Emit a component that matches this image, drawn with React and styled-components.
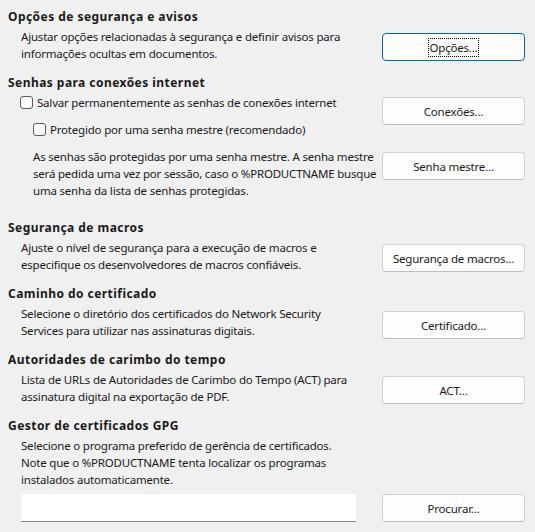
import React from "react";
import styled, { createGlobalStyle } from "styled-components";

const GlobalStyle = createGlobalStyle`
	html, body {
		margin: 0;
		padding: 0;
		background: #f0f0f0;
	}
	body {
		font-family: "Noto Sans", "Open Sans", sans-serif;
		font-size: 11.5px;
		letter-spacing: -0.2px;
		color: #1a1a1a;
	}
`;

const Page = styled.div`
	width: 535px;
	height: 532px;
	box-sizing: border-box;
	padding: 8px 10px 0 8px;
	display: flex;
	flex-direction: column;
	gap: 12px;
`;

const Section = styled.section`
	display: flex;
	flex-direction: column;
	gap: 3px;
	padding-bottom: ${(p) => p.$extra || 0}px;
`;

const Heading = styled.h2`
	margin: 0;
	font-size: 12px;
	font-weight: bold;
	letter-spacing: 0.45px;
	line-height: 17px;
	white-space: nowrap;
`;

const Row = styled.div`
	display: flex;
	align-items: ${(p) => p.$align || "flex-end"};
	justify-content: space-between;
	padding-left: ${(p) => p.$inset ?? 13}px;
`;

const Stack = styled.div`
	display: flex;
	flex-direction: column;
	gap: ${(p) => p.$gap || 0}px;
	padding-left: 13px;
`;

const Text = styled.p`
	margin: 0;
	line-height: 17px;
	white-space: nowrap;
	padding-left: ${(p) => p.$indent || 0}px;
`;

const Column = styled.div`
	display: flex;
	flex-direction: column;
	gap: ${(p) => p.$gap || 0}px;
	padding-top: ${(p) => p.$top || 0}px;
`;

const Button = styled.button`
	width: 143px;
	height: 28px;
	margin-bottom: ${(p) => (p.$flush ? 0 : 1)}px;
	box-sizing: border-box;
	background: #fdfdfd;
	border: 1px solid ${(p) => (p.$focused ? "#0067c0" : "#d0d0d0")};
	border-bottom-color: ${(p) => (p.$focused ? "#0067c0" : "#bdbdbd")};
	border-radius: 4px;
	font-family: inherit;
	font-size: 11.5px;
	letter-spacing: -0.2px;
	color: #1a1a1a;
	padding: 0;
	display: flex;
	align-items: center;
	justify-content: center;
	flex-shrink: 0;
`;

const FocusLabel = styled.span`
	outline: 1px dotted #000;
	padding: 0 1px;
	line-height: 17px;
`;

const CheckRow = styled.label`
	display: flex;
	align-items: center;
	gap: 4px;
	line-height: 17px;
	height: 17px;
	padding-left: ${(p) => p.$indent || 0}px;
	white-space: nowrap;
`;

const Box = styled.span`
	width: 13px;
	height: 13px;
	box-sizing: border-box;
	border: 1px solid #5a5a5a;
	border-radius: 3px;
	background: #fbfbfb;
	flex-shrink: 0;
`;

const FieldRow = styled.div`
	display: flex;
	align-items: flex-end;
	justify-content: space-between;
`;

const PathInput = styled.input`
	width: 335px;
	height: 28px;
	box-sizing: border-box;
	border: none;
	border-bottom: 1px solid #868686;
	border-radius: 3px 3px 0 0;
	background: #fff;
	font-family: inherit;
	font-size: 11.5px;
	padding: 0 8px;
	outline: none;
`;

function Lines({ lines, indent }) {
	return (
		<Text $indent={indent}>
			{lines.map((l, i) => (
				<React.Fragment key={i}>
					{l}
					{i < lines.length - 1 && <br />}
				</React.Fragment>
			))}
		</Text>
	);
}

export default function App() {
	return (
		<>
			<GlobalStyle />
			<Page>
				<Section>
					<Heading>Opções de segurança e avisos</Heading>
					<Row>
						<Lines
							lines={[
								"Ajustar opções relacionadas à segurança e definir avisos para",
								"informações ocultas em documentos.",
							]}
						/>
						<Button $focused>
							<FocusLabel>Opções...</FocusLabel>
						</Button>
					</Row>
				</Section>

				<Section $extra={8}>
					<Heading>Senhas para conexões internet</Heading>
					<Row $align="flex-start" $inset={12}>
						<Column $gap={10}>
							<CheckRow>
								<Box />
								Salvar permanentemente as senhas de conexões internet
							</CheckRow>
							<CheckRow $indent={13}>
								<Box />
								Protegido por uma senha mestre (recomendado)
							</CheckRow>
							<Lines
								indent={13}
								lines={[
									"As senhas são protegidas por uma senha mestre. A senha mestre",
									"será pedida uma vez por sessão, caso o %PRODUCTNAME busque",
									"uma senha da lista de senhas protegidas.",
								]}
							/>
						</Column>
						<Column $gap={27} $top={3}>
							<Button $flush>Conexões...</Button>
							<Button $flush>Senha mestre...</Button>
						</Column>
					</Row>
				</Section>

				<Section>
					<Heading>Segurança de macros</Heading>
					<Row>
						<Lines
							lines={[
								"Ajuste o nível de segurança para a execução de macros e",
								"especifique os desenvolvedores de macros confiáveis.",
							]}
						/>
						<Button>Segurança de macros...</Button>
					</Row>
				</Section>

				<Section>
					<Heading>Caminho do certificado</Heading>
					<Row>
						<Lines
							lines={[
								"Selecione o diretório dos certificados do Network Security",
								"Services para utilizar nas assinaturas digitais.",
							]}
						/>
						<Button $flush>Certificado...</Button>
					</Row>
				</Section>

				<Section>
					<Heading>Autoridades de carimbo do tempo</Heading>
					<Row>
						<Lines
							lines={[
								"Lista de URLs de Autoridades de Carimbo do Tempo (ACT) para",
								"assinatura digital na exportação de PDF.",
							]}
						/>
						<Button>ACT...</Button>
					</Row>
				</Section>

				<Section>
					<Heading>Gestor de certificados GPG</Heading>
					<Stack $gap={6}>
						<Lines
							lines={[
								"Selecione o programa preferido de gerência de certificados.",
								"Note que o %PRODUCTNAME tenta localizar os programas",
								"instalados automaticamente.",
							]}
						/>
						<FieldRow>
							<PathInput />
							<Button $flush>Procurar...</Button>
						</FieldRow>
					</Stack>
				</Section>
			</Page>
		</>
	);
}
